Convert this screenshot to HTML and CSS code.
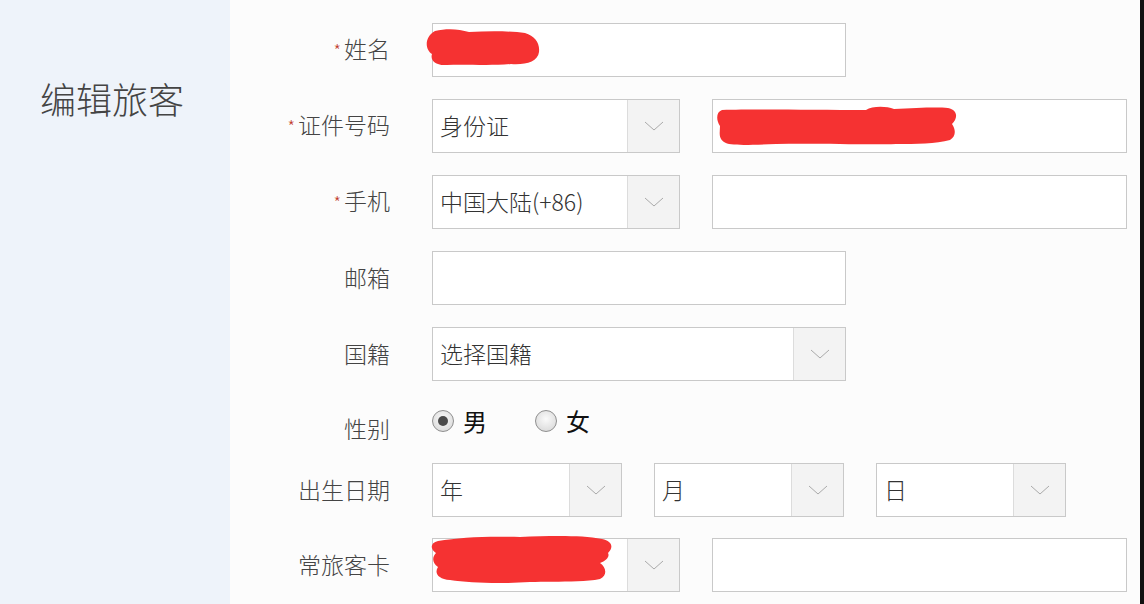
FILE: index.html
```html
<!DOCTYPE html>
<html lang="zh-CN">
<head>
    <meta charset="UTF-8">
    <title>编辑旅客</title>
    <link rel="stylesheet" href="styles.css">
</head>
<body>
    <div class="sidebar">
        <h1 class="title">编辑旅客</h1>
    </div>
    <div class="main">
        <div class="row">
            <div class="label"><span class="req">*</span>姓名</div>
            <div class="field wide">
                <svg class="blot" style="left:-8px;top:4px" width="116" height="40" viewBox="0 0 116 40">
                    <path d="M10 3 C22 0 34 1 44 4 C64 3 86 3 100 5 C110 8 115 15 114 24 C113 34 100 37 86 36 C64 38 40 36 22 37 C10 38 5 32 7 26 C0 22 -1 9 10 3 Z" fill="#f53232"/>
                </svg>
            </div>
        </div>
        <div class="row">
            <div class="label"><span class="req">*</span>证件号码</div>
            <div class="select small">
                <span class="value">身份证</span>
                <span class="arrow"><svg width="20" height="10" viewBox="0 0 20 10"><path d="M1 1 L10 9 L19 1" fill="none" stroke="#aaa" stroke-width="1"/></svg></span>
            </div>
            <div class="field long">
                <svg class="blot" style="left:3px;top:6px" width="242" height="42" viewBox="0 0 242 42">
                    <path d="M6 4 C40 3 100 4 150 4 C156 0 170 0 178 3 C200 2 220 1 232 2 C242 4 242 12 236 18 C240 24 240 30 234 34 C220 38 200 38 180 38 C150 39 100 37 60 38 C30 39 14 40 8 36 C2 32 4 26 4 20 C0 14 0 6 6 4 Z" fill="#f53232"/>
                </svg>
            </div>
        </div>
        <div class="row">
            <div class="label"><span class="req">*</span>手机</div>
            <div class="select small">
                <span class="value">中国大陆(+86)</span>
                <span class="arrow"><svg width="20" height="10" viewBox="0 0 20 10"><path d="M1 1 L10 9 L19 1" fill="none" stroke="#aaa" stroke-width="1"/></svg></span>
            </div>
            <div class="field long"></div>
        </div>
        <div class="row">
            <div class="label">邮箱</div>
            <div class="field wide"></div>
        </div>
        <div class="row">
            <div class="label">国籍</div>
            <div class="select wide">
                <span class="value">选择国籍</span>
                <span class="arrow"><svg width="20" height="10" viewBox="0 0 20 10"><path d="M1 1 L10 9 L19 1" fill="none" stroke="#aaa" stroke-width="1"/></svg></span>
            </div>
        </div>
        <div class="row radio-row">
            <div class="label low">性别</div>
            <div class="radios">
                <label class="radio"><span class="dot checked"></span>男</label>
                <label class="radio"><span class="dot"></span>女</label>
            </div>
        </div>
        <div class="row date-row">
            <div class="label">出生日期</div>
            <div class="select date">
                <span class="value">年</span>
                <span class="arrow"><svg width="20" height="10" viewBox="0 0 20 10"><path d="M1 1 L10 9 L19 1" fill="none" stroke="#aaa" stroke-width="1"/></svg></span>
            </div>
            <div class="select date">
                <span class="value">月</span>
                <span class="arrow"><svg width="20" height="10" viewBox="0 0 20 10"><path d="M1 1 L10 9 L19 1" fill="none" stroke="#aaa" stroke-width="1"/></svg></span>
            </div>
            <div class="select date">
                <span class="value">日</span>
                <span class="arrow"><svg width="20" height="10" viewBox="0 0 20 10"><path d="M1 1 L10 9 L19 1" fill="none" stroke="#aaa" stroke-width="1"/></svg></span>
            </div>
        </div>
        <div class="row">
            <div class="label">常旅客卡</div>
            <div class="select small">
                <span class="value"></span>
                <span class="arrow"><svg width="20" height="10" viewBox="0 0 20 10"><path d="M1 1 L10 9 L19 1" fill="none" stroke="#aaa" stroke-width="1"/></svg></span>
                <svg class="blot" style="left:-3px;top:-4px" width="184" height="50" viewBox="0 0 184 50">
                    <path d="M8 6 C30 2 60 1 90 2 C120 1 150 0 172 4 C182 6 184 12 178 18 C180 22 176 26 170 28 C176 32 178 40 170 44 C150 48 120 46 100 47 C70 49 40 48 20 45 C8 44 4 38 8 32 C2 28 2 22 6 18 C0 14 0 8 8 6 Z" fill="#f53232"/>
                </svg>
            </div>
            <div class="field long"></div>
        </div>
    </div>
</body>
</html>
```

FILE: styles.css
```css
body {
    margin: 0;
    display: flex;
    height: 604px;
    overflow: hidden;
    font-family: "Noto Sans CJK SC", "Noto Sans", sans-serif;
    background: #fcfcfc;
}

.sidebar {
    width: 230px;
    flex-shrink: 0;
    background: #eef3fa;
}

.title {
    margin: 0;
    padding: 76px 0 0 40px;
    font-size: 36px;
    font-weight: 300;
    line-height: 44px;
    color: #444;
}

.main {
    flex: 1;
    padding-top: 23px;
    background: #fcfcfc;
    border-right: 4px solid #111;
}

.row {
    display: flex;
    align-items: center;
    height: 54px;
    margin-bottom: 22px;
}

.label {
    width: 160px;
    margin-right: 42px;
    text-align: right;
    font-size: 23px;
    font-weight: 300;
    line-height: 30px;
    margin-top: -3px;
    color: #444;
    flex-shrink: 0;
}

/* red star before required fields */
.req {
    color: #c0392b;
    font-size: 17px;
    margin-right: 3px;
    vertical-align: 1px;
}

.field,
.select {
    position: relative;
    box-sizing: border-box;
    height: 54px;
    border: 1px solid #c9c9c9;
    background: #fff;
    flex-shrink: 0;
}

.wide {
    width: 414px;
}

.small {
    width: 248px;
}

.long {
    width: 415px;
    margin-left: 32px;
}

.date {
    width: 190px;
    margin-right: 32px;
}

.select {
    display: flex;
}

.value {
    flex: 1;
    padding-left: 7px;
    font-size: 23px;
    font-weight: 300;
    line-height: 50px;
    color: #333;
}

.arrow {
    width: 51px;
    display: flex;
    align-items: center;
    justify-content: center;
    background: #f3f3f3;
    border-left: 1px solid #dcdcdc;
}

.blot {
    position: absolute;
}

.radio-row {
    height: 38px;
}

.label.low {
    align-self: flex-end;
    margin-bottom: -2px;
}

.radios {
    display: flex;
    align-self: flex-start;
}

.radio {
    display: flex;
    align-items: center;
    font-size: 24px;
    color: #111;
    margin-right: 48px;
}

.dot {
    width: 22px;
    height: 22px;
    box-sizing: border-box;
    border-radius: 50%;
    border: 1px solid #8f8f8f;
    background: radial-gradient(circle at 50% 40%, #fafafa, #d4d4d4);
    margin-right: 9px;
    position: relative;
}

.dot.checked::after {
    content: "";
    position: absolute;
    left: 5px;
    top: 5px;
    width: 10px;
    height: 10px;
    border-radius: 50%;
    background: #4a4a4a;
}

.date-row {
    margin-bottom: 21px;
}
```
